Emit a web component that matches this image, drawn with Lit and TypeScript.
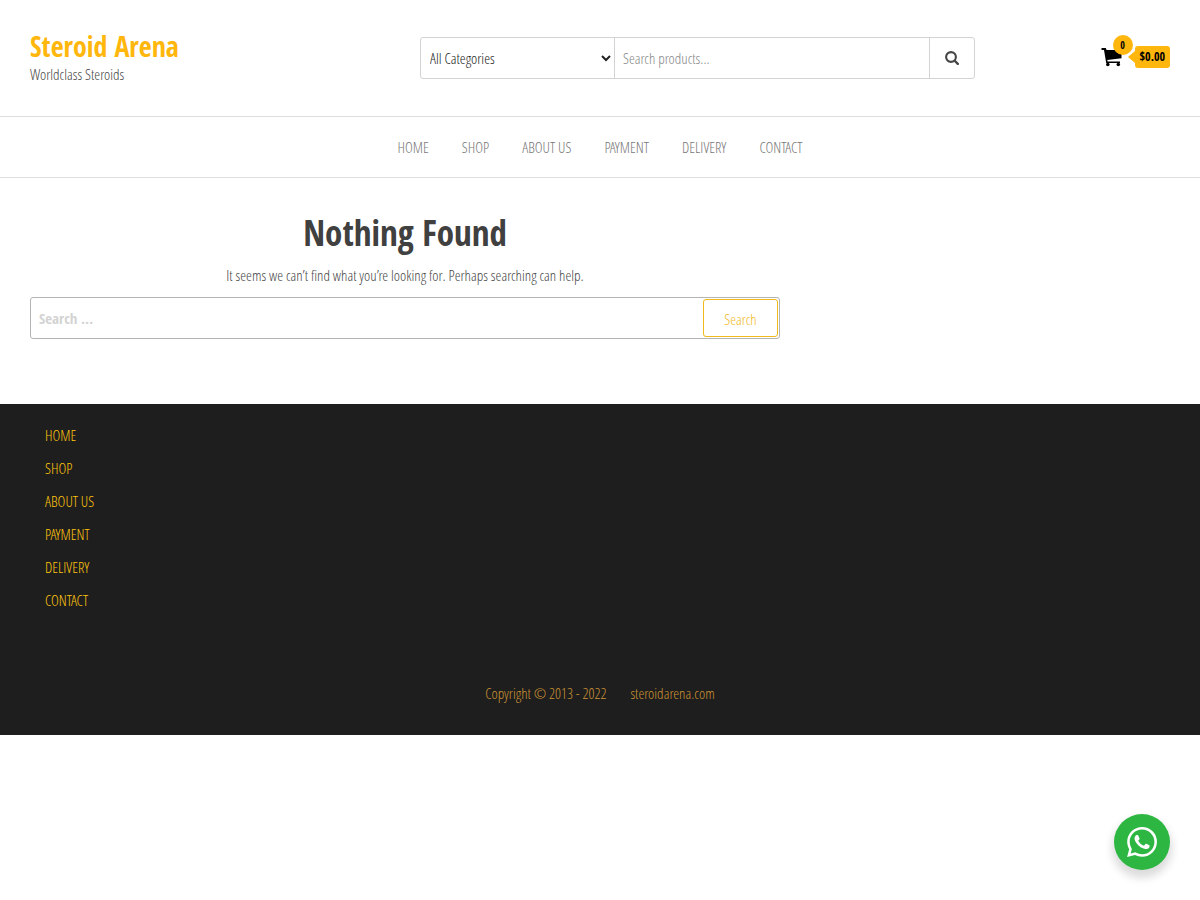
import { LitElement, html, css } from "lit";
import { customElement } from "lit/decorators.js";

const PAGES = ["HOME", "SHOP", "ABOUT US", "PAYMENT", "DELIVERY", "CONTACT"];

@customElement("app-root")
export class AppRoot extends LitElement {
  static styles = css`
    :host {
      --bold: "Open Sans Condensed", "Open Sans", sans-serif;
      display: block;
      font-family: "Open Sans Condensed Light", "OpenSans-CondensedLight", "Open Sans Condensed", "Open Sans", sans-serif;
      font-size: 15px;
      font-weight: 300;
      line-height: 24px;
      color: #464646;
      background: #fff;
    }
    * { box-sizing: border-box; }
    a { color: inherit; text-decoration: none; }
    ul { list-style: none; margin: 0; padding: 0; }
    input, select, button { font: inherit; margin: 0; }

    .header {
      display: grid;
      grid-template-columns: repeat(12, minmax(0, 1fr));
      column-gap: 30px;
      align-items: start;
      padding: 30px 30px 29px;
      border-bottom: 1px solid #ddd;
    }
    .brand { grid-column: span 4; }
    .title { margin: 0; font-family: var(--bold); font-size: 28px; line-height: 33px; font-weight: 700; color: #ffb70e; }
    .tagline { margin: 0; line-height: 22px; }
    .products {
      grid-column: span 6;
      display: flex;
      height: 42px;
      margin: 7px 0 8px;
      border: 1px solid #d3d3d3;
      border-radius: 3px;
    }
    .products select {
      width: 194px;
      padding: 0 5px;
      border: 0;
      border-right: 1px solid #d3d3d3;
      background: transparent;
      color: #222;
    }
    .products input { flex: 1; min-width: 0; padding: 0 8px; border: 0; background: transparent; }
    .products input::placeholder { color: #888; }
    .products button {
      display: grid;
      place-items: center;
      width: 45px;
      padding: 0;
      border: 0;
      border-left: 1px solid #d3d3d3;
      background: transparent;
      color: #464646;
    }
    .cart {
      grid-column: span 2;
      position: relative;
      justify-self: end;
      display: flex;
      align-items: center;
      gap: 13px;
      margin-top: 16px;
      color: #000;
      font-family: var(--bold);
      font-weight: 700;
    }
    .cart svg { display: block; }
    .count {
      position: absolute;
      left: 12px;
      top: -11px;
      width: 20px;
      height: 20px;
      border-radius: 50%;
      background: #ffb70e;
      font-size: 10px;
      line-height: 20px;
      text-align: center;
    }
    .amount {
      position: relative;
      padding: 0 5px;
      border-radius: 3px;
      background: #ffb70e;
      font-size: 12px;
      line-height: 22px;
    }
    .amount::before {
      content: "";
      position: absolute;
      left: -7px;
      top: 5px;
      border: 6px solid transparent;
      border-left: 0;
      border-right: 7px solid #ffb70e;
    }

    .menu { border-bottom: 1px solid #ddd; }
    .menu ul {
      display: flex;
      justify-content: center;
      gap: 33px;
      padding: 18px 30px;
      color: #777;
    }

    .main { padding: 30px 30px 65px; }
    .content { width: calc((100% + 30px) * 2 / 3 - 30px); text-align: center; }
    h1 { margin: 0; font-family: var(--bold); font-size: 35px; line-height: 50px; font-weight: 700; color: #404040; }
    .content p { margin: 5px 0 10px; }
    .search {
      display: flex;
      height: 42px;
      padding: 1px;
      border: 1px solid #b4b4b4;
      border-radius: 3px;
    }
    .search input { flex: 1; min-width: 0; padding: 0 7px; border: 0; font-family: var(--bold); font-weight: 700; background: transparent; }
    .search input::placeholder { color: #d3d3d3; }
    .search button {
      min-width: 75px;
      padding: 2px 20px 0;
      border: 1px solid #f0b91c;
      border-radius: 3px;
      background: transparent;
      color: #f0b91c;
    }

    .footer { background: #1e1e1e; color: #ffc40e; }
    .footer ul { display: grid; gap: 9px; padding: 19px 45px 0; }
    .copyright {
      display: flex;
      justify-content: center;
      gap: 24px;
      padding: 69px 30px 30px;
      color: #cd9434;
    }

    .chat {
      position: fixed;
      right: 30px;
      bottom: 30px;
      display: grid;
      place-items: center;
      width: 56px;
      height: 56px;
      border-radius: 50%;
      background: #2db742;
      box-shadow: 0 6px 8px 2px rgba(0, 0, 0, 0.14);
    }
  `;

  render() {
    return html`
      <header class="header">
        <div class="brand">
          <p class="title"><a href="#">Steroid Arena</a></p>
          <p class="tagline">Worldclass Steroids</p>
        </div>
        <form class="products" role="search">
          <select aria-label="Category">
            <option>All Categories</option>
          </select>
          <input type="text" placeholder="Search products..." aria-label="Search products" />
          <button type="button" aria-label="Search products">
            <svg width="14" height="14" viewBox="0 0 14 14" fill="none" stroke="currentColor">
              <circle cx="6" cy="6" r="4.9" stroke-width="2.1" />
              <path d="M9.5 9.5 12.800 12.800" stroke-width="2.400" stroke-linecap="round" />
            </svg>
          </button>
        </form>
        <a class="cart" href="#" aria-label="Cart">
          <svg width="21" height="19" viewBox="0 0 21 19" fill="currentColor">
            <path d="M.5 0h4.300l.8 2H20.500v8.200L6.300 12l.3 1.500H19V15H5.200L3 2H.5z" />
            <circle cx="6.800" cy="16.500" r="1.800" />
            <circle cx="17.300" cy="16.500" r="1.800" />
          </svg>
          <span class="count">0</span>
          <span class="amount">$0.00</span>
        </a>
      </header>
      <nav class="menu" aria-label="Main">
        <ul>${PAGES.map((p) => html`<li><a href="#">${p}</a></li>`)}</ul>
      </nav>
      <main class="main">
        <section class="content">
          <h1>Nothing Found</h1>
          <p>It seems we can’t find what you’re looking for. Perhaps searching can help.</p>
          <form class="search" role="search">
            <input type="text" placeholder="Search …" aria-label="Search for" />
            <button type="button">Search</button>
          </form>
        </section>
      </main>
      <footer class="footer">
        <ul>${PAGES.map((p) => html`<li><a href="#">${p}</a></li>`)}</ul>
        <div class="copyright"><span>Copyright © 2013 - 2022</span><a href="#">steroidarena.com</a></div>
      </footer>
      <a class="chat" href="#" aria-label="WhatsApp">
        <svg width="30" height="30" viewBox="0 0 24 24" fill="#fff">
          <path d="M17.472 14.382c-.297-.149-1.758-.867-2.030-.967-.273-.099-.471-.148-.67.150-.197.297-.767.966-.940 1.164-.173.199-.347.223-.644.075-.297-.150-1.255-.463-2.390-1.475-.883-.788-1.480-1.761-1.653-2.059-.173-.297-.018-.458.130-.606.134-.133.298-.347.446-.520.149-.174.198-.298.298-.497.099-.198.050-.371-.025-.520-.075-.149-.669-1.612-.916-2.207-.242-.579-.487-.500-.669-.510-.173-.008-.371-.010-.570-.010-.198 0-.520.074-.792.372-.272.297-1.040 1.016-1.040 2.479 0 1.462 1.065 2.875 1.213 3.074.149.198 2.096 3.200 5.077 4.487.709.306 1.262.489 1.694.625.712.227 1.360.195 1.871.118.571-.085 1.758-.719 2.006-1.413.248-.694.248-1.289.173-1.413-.074-.124-.272-.198-.570-.347m-5.421 7.403h-.004a9.870 9.870 0 0 1-5.031-1.378l-.361-.214-3.741.982.998-3.648-.235-.374a9.860 9.860 0 0 1-1.510-5.260c.001-5.450 4.436-9.884 9.888-9.884 2.640 0 5.122 1.030 6.988 2.898a9.825 9.825 0 0 1 2.893 6.994c-.003 5.450-4.437 9.884-9.885 9.884m8.413-18.297A11.815 11.815 0 0 0 12.050 0C5.495 0 .160 5.335.157 11.892c0 2.096.547 4.142 1.588 5.945L.057 24l6.305-1.654a11.882 11.882 0 0 0 5.683 1.448h.005c6.554 0 11.890-5.335 11.893-11.893a11.821 11.821 0 0 0-3.480-8.413z" />
        </svg>
      </a>
    `;
  }
}
